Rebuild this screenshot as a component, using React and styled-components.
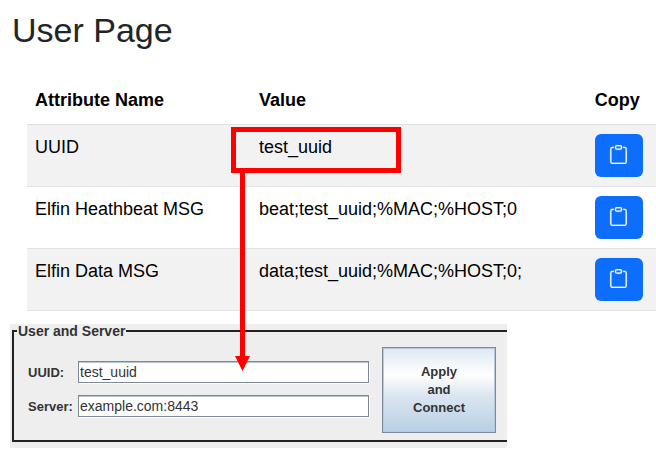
import React from "react";
import styled, { createGlobalStyle } from "styled-components";

const GlobalStyle = createGlobalStyle`
  * { box-sizing: border-box; }
  body {
    margin: 0;
    background: #fff;
    color: #000;
    font-family: "Liberation Sans", Arial, sans-serif;
    font-size: 18px;
    overflow: hidden;
  }
`;

const Title = styled.h1`
  margin: 0;
  padding: 8px 12px 0;
  color: #212529;
  font-size: 34px;
  font-weight: 400;
  line-height: 44px;
`;

const TableWrap = styled.div`
  padding: 24px 0 0 27px;
`;

const Table = styled.table`
  width: 100%;
  table-layout: fixed;
  border-spacing: 0;
  text-align: left;
  line-height: 27px;
`;

const HeadCell = styled.th`
  width: ${(p) => p.$width};
  padding: 11px 8px 10px;
  border-bottom: 1px solid #dee2e6;
  font-weight: 700;
`;

const Row = styled.tr`
  background: ${(p) => (p.$striped ? "#f2f2f2" : "#fff")};
`;

const Cell = styled.td`
  position: relative;
  padding: 9px 8px;
  border-bottom: 1px solid #dee2e6;
  vertical-align: top;
  white-space: nowrap;
`;

const CopyButton = styled.button`
  display: flex;
  align-items: center;
  justify-content: center;
  width: 48px;
  height: 43px;
  padding: 0 0 2px;
  border: 0;
  border-radius: 6px;
  background: #0d6efd;
  color: #fff;
  cursor: pointer;
`;

const Highlight = styled.div`
  position: absolute;
  z-index: 1;
  top: 2px;
  left: -20px;
  width: 170px;
  height: 46px;
  border: 5px solid #f00;
  pointer-events: none;
`;

const Arrow = styled.svg`
  position: absolute;
  top: 40px;
  left: -1px;
`;

const Panel = styled.section`
  width: 497px;
  max-width: calc(100% - 20px);
  margin: 13px 0 0 10px;
  padding: 0 0 6px 2px;
  background: #eee;
  color: #333;
  font-size: 13px;
`;

const Group = styled.fieldset`
  display: flex;
  gap: 13px;
  min-width: 0;
  margin: 0;
  padding: 9px 11px 7px 14px;
  border: 2px solid #222;
  border-right: 0;
`;

const Legend = styled.legend`
  margin-left: -11px;
  padding: 0 1px;
  font-size: 14px;
  font-weight: 700;
  line-height: 14px;
`;

const Fields = styled.div`
  display: flex;
  flex: 1;
  flex-direction: column;
  gap: 12px;
  min-width: 0;
  padding-top: 14px;
`;

const Field = styled.div`
  display: grid;
  grid-template-columns: 50px 1fr;
  align-items: center;
`;

const Label = styled.label`
  font-weight: 700;
`;

const TextBox = styled.input`
  width: 100%;
  min-width: 0;
  height: 22px;
  padding: 0 1px;
  border: 1px solid #7a8a99;
  border-radius: 0;
  background: #fff;
  box-shadow: inset 0 1px #b8c4d0, 1px 1px #fff;
  color: #333;
  font-family: inherit;
  font-size: 14px;
`;

const ApplyButton = styled.button`
  width: 114px;
  height: 86px;
  padding: 0 16px;
  border: 1px solid #7a8a99;
  background: linear-gradient(#dde8f3 0%, #fff 32%, #dce6f1 56%, #b8cfe5 100%);
  box-shadow: inset 0 0 0 1px #b8c9da;
  color: #333;
  font-family: inherit;
  font-size: 13px;
  font-weight: 700;
  line-height: 18px;
  cursor: pointer;
`;

function ClipboardIcon() {
  return (
    <svg width="19" height="19" viewBox="0 0 16 16" fill="currentColor" stroke="currentColor" strokeWidth="0.2" aria-hidden="true">
      <path d="M4 1.5H3a2 2 0 0 0-2 2V14a2 2 0 0 0 2 2h10a2 2 0 0 0 2-2V3.500a2 2 0 0 0-2-2h-1v1h1a1 1 0 0 1 1 1V14a1 1 0 0 1-1 1H3a1 1 0 0 1-1-1V3.500a1 1 0 0 1 1-1h1z" />
      <path d="M9.500 1a.5.5 0 0 1 .5.5v1a.5.5 0 0 1-.5.5h-3a.5.5 0 0 1-.5-.5v-1a.5.5 0 0 1 .5-.5zm-3-1A1.500 1.500 0 0 0 5 1.500v1A1.500 1.500 0 0 0 6.500 4h3A1.500 1.500 0 0 0 11 2.500v-1A1.500 1.500 0 0 0 9.500 0z" />
    </svg>
  );
}

const attributes = [
  { name: "UUID", value: "test_uuid", highlighted: true },
  { name: "Elfin Heathbeat MSG", value: "beat;test_uuid;%MAC;%HOST;0" },
  { name: "Elfin Data MSG", value: "data;test_uuid;%MAC;%HOST;0;" },
];

export default function App() {
  return (
    <>
      <GlobalStyle />
      <main>
        <Title>User Page</Title>
        <TableWrap>
          <Table>
            <thead>
              <tr>
                <HeadCell $width="35.6%">Attribute Name</HeadCell>
                <HeadCell $width="53.4%">Value</HeadCell>
                <HeadCell $width="11%">Copy</HeadCell>
              </tr>
            </thead>
            <tbody>
              {attributes.map((item, index) => (
                <Row key={item.name} $striped={index % 2 === 0}>
                  <Cell>{item.name}</Cell>
                  <Cell>
                    {item.value}
                    {item.highlighted && (
                      <Highlight>
                        <Arrow width="15" height="199" viewBox="0 0 15 199" fill="#f00" aria-hidden="true">
                          <path d="M5 0h5v184h5L7.500 199 0 184h5z" />
                        </Arrow>
                      </Highlight>
                    )}
                  </Cell>
                  <Cell>
                    <CopyButton type="button" aria-label={`Copy ${item.name}`}>
                      <ClipboardIcon />
                    </CopyButton>
                  </Cell>
                </Row>
              ))}
            </tbody>
          </Table>
        </TableWrap>
        <Panel>
          <Group>
            <Legend>User and Server</Legend>
            <Fields>
              <Field>
                <Label htmlFor="uuid">UUID:</Label>
                <TextBox id="uuid" defaultValue="test_uuid" />
              </Field>
              <Field>
                <Label htmlFor="server">Server:</Label>
                <TextBox id="server" defaultValue="example.com:8443" />
              </Field>
            </Fields>
            <ApplyButton type="button">
              Apply
              <br />
              and
              <br />
              Connect
            </ApplyButton>
          </Group>
        </Panel>
      </main>
    </>
  );
}
